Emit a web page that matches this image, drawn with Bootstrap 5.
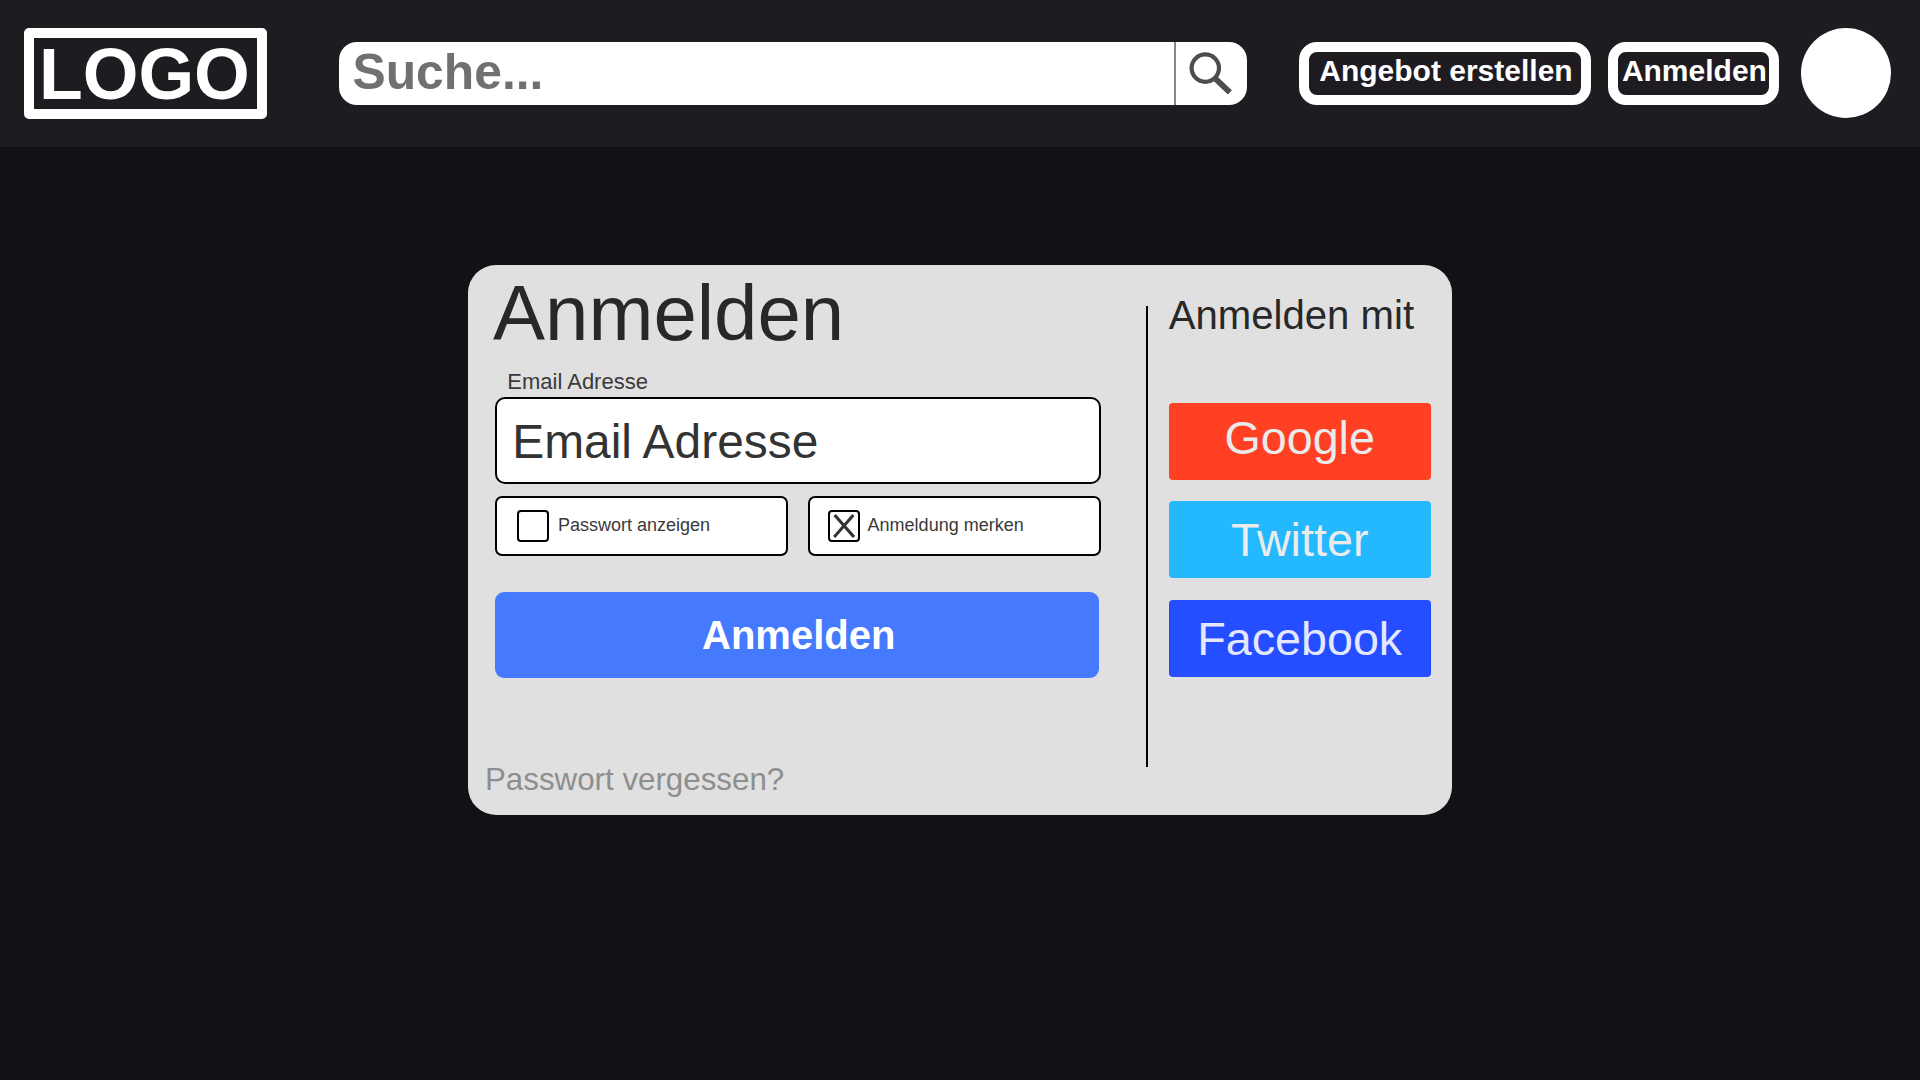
<!DOCTYPE html>
<html lang="de" class="h-100">
<head>
<meta charset="utf-8">
<meta name="viewport" content="width=device-width, initial-scale=1">
<title>Anmelden</title>
<link href="https://cdn.jsdelivr.net/npm/bootstrap@5.3.0/dist/css/bootstrap.min.css" rel="stylesheet">
<style>
body{background:#121116;font-family:"Liberation Sans",Arial,sans-serif;overflow:hidden}
.topbar{height:147px;background:#1e1b21;padding-left:24px}
.brand-box{width:243px;height:91px;border:10px solid #fff;border-radius:5px;color:#fff;font-size:71.6px;line-height:73px;padding-left:5px}
.search-box{width:907.4px;height:63px;margin-left:72.3px;border-radius:18px;background:#fff;overflow:hidden}
.search-text{font-size:49.8px;line-height:60px;color:#707070;padding-left:13.2px}
.search-btn{width:72.7px;border-left:2px solid #868686}
.outline-btn{height:63px;border:10px solid #fff;border-radius:18px;color:#fff;font-size:30px;line-height:38px}
.btn-offer{width:292.5px;margin-left:52.1px;padding-left:10.5px}
.btn-login{width:171.3px;margin-left:16.6px;padding-left:4px}
.avatar{width:90.5px;height:90.5px;margin:0 0 1px 21.6px}
.login-card{width:984px;height:549.3px;margin:118.3px auto 0;border-radius:28px;background:#e0e0e0;padding-left:27px;color:#282828}
.form-col{width:606px;padding-top:9px}
.title{font-size:78px;line-height:78.8px;margin:0 0 15.2px -2px}
.field-label{font-size:22px;line-height:28px;margin:0 0 1px 12.3px;color:#3a3a3a}
.field{height:87px;border:2px solid #000;border-radius:10px;font-size:47.9px;line-height:86px;padding-left:15.2px;color:#333}
.option{width:293px;height:60px;border:2px solid #000;border-radius:7px;font-size:18px;color:#3a3a3a}
.option-text{line-height:20px;padding-top:16.5px}
.box{width:32px;height:32px;margin:12px 8.6px 0 20.3px;border:2px solid #000;border-radius:4px}
.box-r{margin-left:18.3px;margin-right:7.3px}
.submit{width:604.4px;height:86px;margin-top:36px;border-radius:9px;background:#457aff;font-size:40px;line-height:86px;color:#fff;padding-left:3px}
.forgot{font-size:31.3px;line-height:38px;margin:82.5px 0 0 -10px;color:#8e8e8e}
.rule-v{width:2px;height:461.5px;margin:40.5px 0 0 44.6px;background:#000}
.social-col{width:262px;margin-left:21.1px;padding-top:27.8px}
.social-title{font-size:40.15px;line-height:46px;margin-bottom:64.2px}
.social{height:77px;border-radius:4px;font-size:46.7px;color:#ebebeb;line-height:79px}
.google{background:#ff4022;line-height:71px}
.twitter{background:#24b8ff;margin-top:20.7px}
.facebook{background:#244eff;color:#e4e8ff;margin-top:22px}
</style>
</head>
<body>
<header class="topbar d-flex align-items-center">
  <div class="brand-box fw-bold flex-shrink-0">LOGO</div>
  <div class="search-box d-flex flex-shrink-0">
    <div class="search-text fw-bold flex-grow-1">Suche...</div>
    <div class="search-btn">
      <svg class="d-block" width="70" height="63" viewBox="0 0 70 63" fill="none" stroke="#4d4d4d"><circle cx="29.3" cy="26.1" r="13.7" stroke-width="4.2"/><path d="M38.3 35.6 53.9 50.4" stroke-width="5.8"/></svg>
    </div>
  </div>
  <div role="button" class="outline-btn btn-offer fw-bold text-nowrap flex-shrink-0">Angebot erstellen</div>
  <div role="button" class="outline-btn btn-login fw-bold text-nowrap flex-shrink-0">Anmelden</div>
  <div class="avatar rounded-circle bg-white flex-shrink-0"></div>
</header>

<main class="login-card d-flex align-items-start">
  <section class="form-col">
    <h1 class="title fw-normal">Anmelden</h1>
    <div class="field-label">Email Adresse</div>
    <div class="field bg-white">Email Adresse</div>
    <div class="options-row d-flex justify-content-between pt-2 mt-1">
      <div class="option bg-white d-flex"><span class="box"></span><span class="option-text">Passwort anzeigen</span></div>
      <div class="option bg-white d-flex">
        <span class="box box-r"><svg class="d-block" width="28" height="28" viewBox="0 0 28 28" fill="none" stroke="#333"><path d="M4.6 3 24 25" stroke-width="3.2"/><path d="M23.4 3 4.2 25" stroke-width="3"/></svg></span><span class="option-text">Anmeldung merken</span>
      </div>
    </div>
    <div role="button" class="submit fw-bold text-center">Anmelden</div>
    <div class="forgot">Passwort vergessen?</div>
  </section>
  <div class="rule-v"></div>
  <section class="social-col">
    <h2 class="social-title fw-normal text-nowrap">Anmelden mit</h2>
    <div role="button" class="social google text-center">Google</div>
    <div role="button" class="social twitter text-center">Twitter</div>
    <div role="button" class="social facebook text-center">Facebook</div>
  </section>
</main>
<script src="https://cdn.jsdelivr.net/npm/bootstrap@5.3.0/dist/js/bootstrap.bundle.min.js"></script>
</body>
</html>
